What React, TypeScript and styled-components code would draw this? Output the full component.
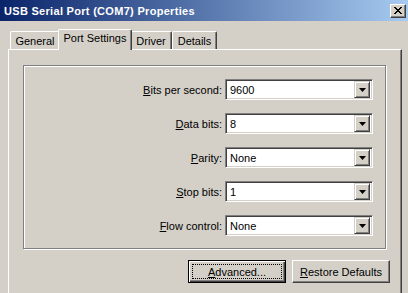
import React from 'react';
import styled, { createGlobalStyle } from 'styled-components';

const GlobalStyle = createGlobalStyle`
  html, body {
    margin: 0;
    padding: 0;
    background: #d4d0c8;
  }
  body {
    font-family: "Liberation Sans", Arial, sans-serif;
    font-size: 11px;
    color: #000;
  }
`;

const face = '#d4d0c8';
const shadow = '#808080';
const dark = '#404040';

const Window = styled.div`
  width: 408px;
  height: 293px;
  overflow: hidden;
  background: ${face};
  display: flex;
  flex-direction: column;
`;

const TitleBar = styled.div`
  height: 21px;
  flex: none;
  display: flex;
  align-items: center;
  justify-content: space-between;
  padding: 0 2px 0 4px;
  background: linear-gradient(to right, #0a246a, #a6caf0);
`;

const Title = styled.span`
  color: #fff;
  font-weight: bold;
  font-size: 11px;
  letter-spacing: 0.3px;
  white-space: nowrap;
`;

const CloseButton = styled.div`
  width: 16px;
  height: 14px;
  box-sizing: border-box;
  background: ${face};
  border: 1px solid;
  border-color: #fff ${dark} ${dark} #fff;
  box-shadow: inset -1px -1px ${shadow};
  display: flex;
  align-items: center;
  justify-content: center;
`;

const Body = styled.div`
  flex: 1;
  padding: 8px 6px 0 8px;
  display: flex;
  flex-direction: column;
`;

const TabStrip = styled.div`
  height: 20px;
  display: flex;
  align-items: flex-start;
  padding-left: 2px;
  position: relative;
  z-index: 1;
`;

const Tab = styled.div<{ $active?: boolean; $w: number }>`
  box-sizing: border-box;
  width: ${p => p.$w + (p.$active ? 4 : 0)}px;
  height: ${p => (p.$active ? '21px' : '18px')};
  margin: ${p => (p.$active ? '0 -2px' : '2px 0 0 0')};
  background: ${face};
  border-top: 1px solid #fff;
  border-left: 1px solid #fff;
  border-right: 1px solid ${dark};
  border-radius: 2px 2px 0 0;
  box-shadow: inset -1px 0 ${shadow};
  display: flex;
  justify-content: center;
  align-items: ${p => (p.$active ? 'flex-start' : 'center')};
  padding-top: ${p => (p.$active ? '2px' : '0')};
  white-space: nowrap;
  position: relative;
  z-index: ${p => (p.$active ? 2 : 0)};
`;

const Panel = styled.div`
  flex: 1;
  background: ${face};
  border-top: 1px solid #fff;
  border-left: 1px solid #fff;
  border-right: 1px solid ${dark};
  box-shadow: inset -1px 0 ${shadow};
  display: flex;
  flex-direction: column;
`;

const GroupBox = styled.div`
  margin: 15px 15px 0 14px;
  border: 1px solid ${shadow};
  box-shadow: inset 1px 1px #fff, 1px 1px 0 #fff;
  padding: 13px 12px 12px 0;
  display: grid;
  grid-template-columns: 1fr 148px;
  column-gap: 3px;
  row-gap: 13px;
  align-items: center;
`;

const Label = styled.label`
  text-align: right;
  white-space: nowrap;
`;

const Combo = styled.div`
  height: 21px;
  box-sizing: border-box;
  background: #fff;
  border: 1px solid;
  border-color: ${shadow} #fff #fff ${shadow};
  box-shadow: inset 1px 1px ${dark}, inset -1px -1px ${face};
  display: flex;
  align-items: center;
  padding: 2px;
`;

const ComboValue = styled.span`
  flex: 1;
  padding-left: 2px;
`;

const DropButton = styled.div`
  width: 16px;
  height: 17px;
  box-sizing: border-box;
  background: ${face};
  border: 1px solid;
  border-color: ${face} ${dark} ${dark} ${face};
  box-shadow: inset 1px 1px #fff, inset -1px -1px ${shadow};
  display: flex;
  align-items: center;
  justify-content: center;
`;

const ButtonRow = styled.div`
  display: flex;
  justify-content: flex-end;
  gap: 6px;
  margin: 11px 11px 0 0;
`;

const Button = styled.div<{ $default?: boolean }>`
  width: 98px;
  height: 23px;
  box-sizing: border-box;
  background: ${face};
  border: 1px solid;
  border-color: ${p => (p.$default ? '#000' : `#fff ${dark} ${dark} #fff`)};
  box-shadow: ${p =>
    p.$default
      ? `inset 1px 1px #fff, inset -1px -1px ${dark}, inset -2px -2px ${shadow}`
      : `inset -1px -1px ${shadow}`};
  display: flex;
  padding: 3px;
`;

const ButtonFace = styled.span<{ $focus?: boolean }>`
  flex: 1;
  border: 1px dotted ${p => (p.$focus ? '#000' : 'transparent')};
  display: flex;
  align-items: center;
  justify-content: center;
  white-space: nowrap;
`;

const Arrow = () => (
  <svg width="7" height="4" viewBox="0 0 7 4">
    <path d="M0 0h7L3.5 4z" fill="#000" />
  </svg>
);

const CloseX = () => (
  <svg width="8" height="7" viewBox="0 0 8 7" shapeRendering="crispEdges">
    <path
      d="M0 0h2v1h-2zM6 0h2v1h-2zM1 1h2v1h-2zM5 1h2v1h-2zM2 2h4v1h-4zM3 3h2v1h-2zM2 4h4v1h-4zM1 5h2v1h-2zM5 5h2v1h-2zM0 6h2v1h-2zM6 6h2v1h-2z"
      fill="#000"
    />
  </svg>
);

const rows = [
  { key: 'B', rest: 'its per second:', value: '9600' },
  { key: 'D', rest: 'ata bits:', value: '8' },
  { key: 'P', rest: 'arity:', value: 'None' },
  { key: 'S', rest: 'top bits:', value: '1' },
  { key: 'F', rest: 'low control:', value: 'None' },
];

const tabs = [
  { label: 'General', w: 50 },
  { label: 'Port Settings', w: 70 },
  { label: 'Driver', w: 42 },
  { label: 'Details', w: 45 },
];

export default function App() {
  return (
    <>
      <GlobalStyle />
      <Window>
        <TitleBar>
          <Title>USB Serial Port (COM7) Properties</Title>
          <CloseButton>
            <CloseX />
          </CloseButton>
        </TitleBar>
        <Body>
          <TabStrip>
            {tabs.map(t => (
              <Tab key={t.label} $w={t.w} $active={t.label === 'Port Settings'}>
                {t.label}
              </Tab>
            ))}
          </TabStrip>
          <Panel>
            <GroupBox>
              {rows.map(r => (
                <React.Fragment key={r.key}>
                  <Label>
                    <u>{r.key}</u>
                    {r.rest}
                  </Label>
                  <Combo>
                    <ComboValue>{r.value}</ComboValue>
                    <DropButton>
                      <Arrow />
                    </DropButton>
                  </Combo>
                </React.Fragment>
              ))}
            </GroupBox>
            <ButtonRow>
              <Button $default>
                <ButtonFace $focus>
                  <u>A</u>dvanced...
                </ButtonFace>
              </Button>
              <Button>
                <ButtonFace>
                  <u>R</u>estore Defaults
                </ButtonFace>
              </Button>
            </ButtonRow>
          </Panel>
        </Body>
      </Window>
    </>
  );
}
